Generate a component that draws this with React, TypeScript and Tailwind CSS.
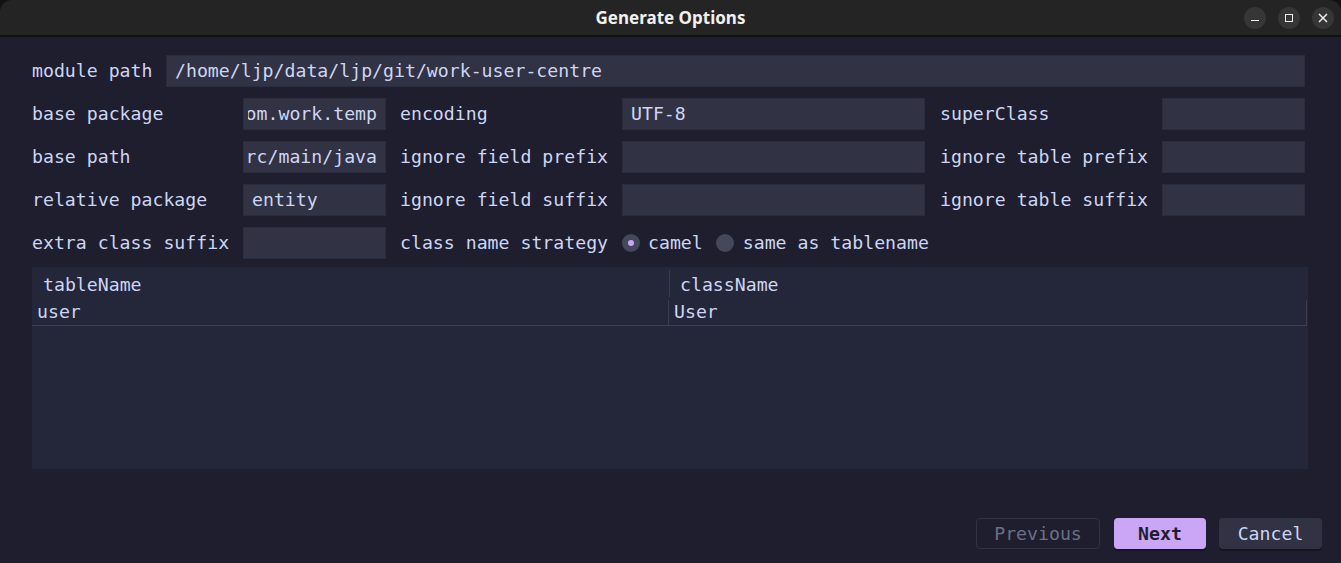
import React from "react";

const mono = { fontFamily: '"DejaVu Sans Mono", "Liberation Mono", monospace' };

function Input({ value = "", w, align = "left" }: { value?: string; w: string; align?: "left" | "right" }) {
  return (
    <div className={`h-[32px] ${w} shrink-0 bg-[#313244] border border-[#2b2c3e] flex items-center overflow-hidden`}>
      <div
        className={`flex-1 min-w-0 h-full flex items-center overflow-hidden whitespace-nowrap ${
          align === "right" ? "justify-end ml-[4px] pr-[8px]" : "justify-start pl-[8px]"
        }`}
      >
        <span className="shrink-0">{value}</span>
      </div>
    </div>
  );
}

function Label({ text, w, cls = "" }: { text: string; w: string; cls?: string }) {
  return <div className={`${w} shrink-0 whitespace-nowrap ${cls}`}>{text}</div>;
}

function Radio({ checked }: { checked?: boolean }) {
  return (
    <div className="w-[18px] h-[18px] rounded-full bg-[#45475a] flex items-center justify-center shrink-0">
      {checked && <div className="w-[6px] h-[6px] rounded-full bg-[#cba6f7]" />}
    </div>
  );
}

export default function App() {
  return (
    <div className="w-[1341px] h-[563px] bg-[#121212] overflow-hidden">
      <div className="w-full h-full flex flex-col rounded-t-[12px] overflow-hidden">
        {/* title bar */}
        <div className="h-[35px] bg-[#242424] relative flex items-center justify-center shrink-0">
          <span
            className="text-[17px] font-bold text-[#f0f0f0]"
            style={{ fontFamily: '"Noto Sans", "Open Sans", sans-serif' }}
          >
            Generate Options
          </span>
          <div className="absolute right-[7px] top-0 h-full flex items-center gap-[12px]">
            <div className="w-[22px] h-[22px] rounded-full bg-[#363636] flex items-center justify-center">
              <div className="w-[8px] h-[1.5px] bg-[#eeeeee] mt-[6px]" />
            </div>
            <div className="w-[22px] h-[22px] rounded-full bg-[#363636] flex items-center justify-center">
              <div className="w-[8px] h-[8px] border-[1.5px] border-[#eeeeee]" />
            </div>
            <div className="w-[22px] h-[22px] rounded-full bg-[#363636] flex items-center justify-center">
              <svg width="10" height="10" viewBox="0 0 10 10">
                <path d="M1 1 L9 9 M9 1 L1 9" stroke="#eeeeee" strokeWidth="1.5" />
              </svg>
            </div>
          </div>
        </div>
        <div className="h-[2px] bg-[#101010] shrink-0" />

        {/* body */}
        <div
          className="flex-1 bg-[#1e1e2e] text-[#cdd6f4] text-[18.2px] flex flex-col pt-[18px] pl-[32px] pr-[33px]"
          style={mono}
        >
          <div className="flex items-center gap-[11px] pr-[3px] leading-none">
            <div className="w-[123px] shrink-0 whitespace-nowrap">module path</div>
            <div className="flex-1 h-[32px] bg-[#313244] border border-[#2b2c3e] flex items-center pl-[8px]">
              /home/ljp/data/ljp/git/work-user-centre
            </div>
          </div>

          <div className="flex flex-col gap-[11px] mt-[11px] leading-none">
            <div className="flex items-center">
              <Label text="base package" w="w-[211px]" />
              <Input value="com.work.temp" w="w-[143px]" align="right" />
              <Label text="encoding" w="w-[222px]" cls="ml-[14px]" />
              <Input value="UTF-8" w="w-[303px]" />
              <Label text="superClass" w="w-[222px]" cls="ml-[15px]" />
              <Input w="w-[143px]" />
            </div>
            <div className="flex items-center">
              <Label text="base path" w="w-[211px]" />
              <Input value="src/main/java" w="w-[143px]" align="right" />
              <Label text="ignore field prefix" w="w-[222px]" cls="ml-[14px]" />
              <Input w="w-[303px]" />
              <Label text="ignore table prefix" w="w-[222px]" cls="ml-[15px]" />
              <Input w="w-[143px]" />
            </div>
            <div className="flex items-center">
              <Label text="relative package" w="w-[211px]" />
              <Input value="entity" w="w-[143px]" />
              <Label text="ignore field suffix" w="w-[222px]" cls="ml-[14px]" />
              <Input w="w-[303px]" />
              <Label text="ignore table suffix" w="w-[222px]" cls="ml-[15px]" />
              <Input w="w-[143px]" />
            </div>
            <div className="flex items-center">
              <Label text="extra class suffix" w="w-[211px]" />
              <Input w="w-[143px]" />
              <Label text="class name strategy" w="w-[222px]" cls="ml-[14px]" />
              <Radio checked />
              <span className="ml-[8px]">camel</span>
              <div className="ml-[13px]">
                <Radio />
              </div>
              <span className="ml-[9px] whitespace-nowrap">same as tablename</span>
            </div>
          </div>

          {/* table */}
          <div className="mt-[8px] h-[202px] bg-[#24263a] w-[1276px] flex flex-col leading-none">
            <div className="h-[33px] flex items-stretch">
              <div className="w-[638px] pl-[11px] pt-[3px] flex items-center border-r border-[#3a3c50] my-[3px]">tableName</div>
              <div className="flex-1 pl-[10px] pt-[3px] flex items-center">className</div>
            </div>
            <div className="h-[26px] flex items-stretch border-b border-[#3d3f54] mr-[1px]">
              <div className="w-[637px] pl-[5px] flex items-center border-r border-[#3a3c50]">user</div>
              <div className="flex-1 pl-[5px] flex items-center border-r border-[#3a3c50]">User</div>
            </div>
          </div>

          {/* buttons */}
          <div className="mt-auto mb-[14px] flex justify-end gap-[14px] mr-[-14px] leading-none">
            <div className="w-[124px] h-[31px] pt-[2px] rounded-[4px] border border-[#313244] text-[#6c7086] flex items-center justify-center">
              Previous
            </div>
            <div className="w-[92px] h-[31px] pt-[2px] rounded-[4px] bg-[#cba6f7] text-[#1e1e2e] font-bold flex items-center justify-center shadow-[0_2px_0_#15151f]">
              Next
            </div>
            <div className="w-[103px] h-[31px] pt-[2px] rounded-[4px] bg-[#313244] text-[#cdd6f4] flex items-center justify-center shadow-[0_2px_0_#15151f] -ml-[1px]">
              Cancel
            </div>
          </div>
        </div>
      </div>
    </div>
  );
}
